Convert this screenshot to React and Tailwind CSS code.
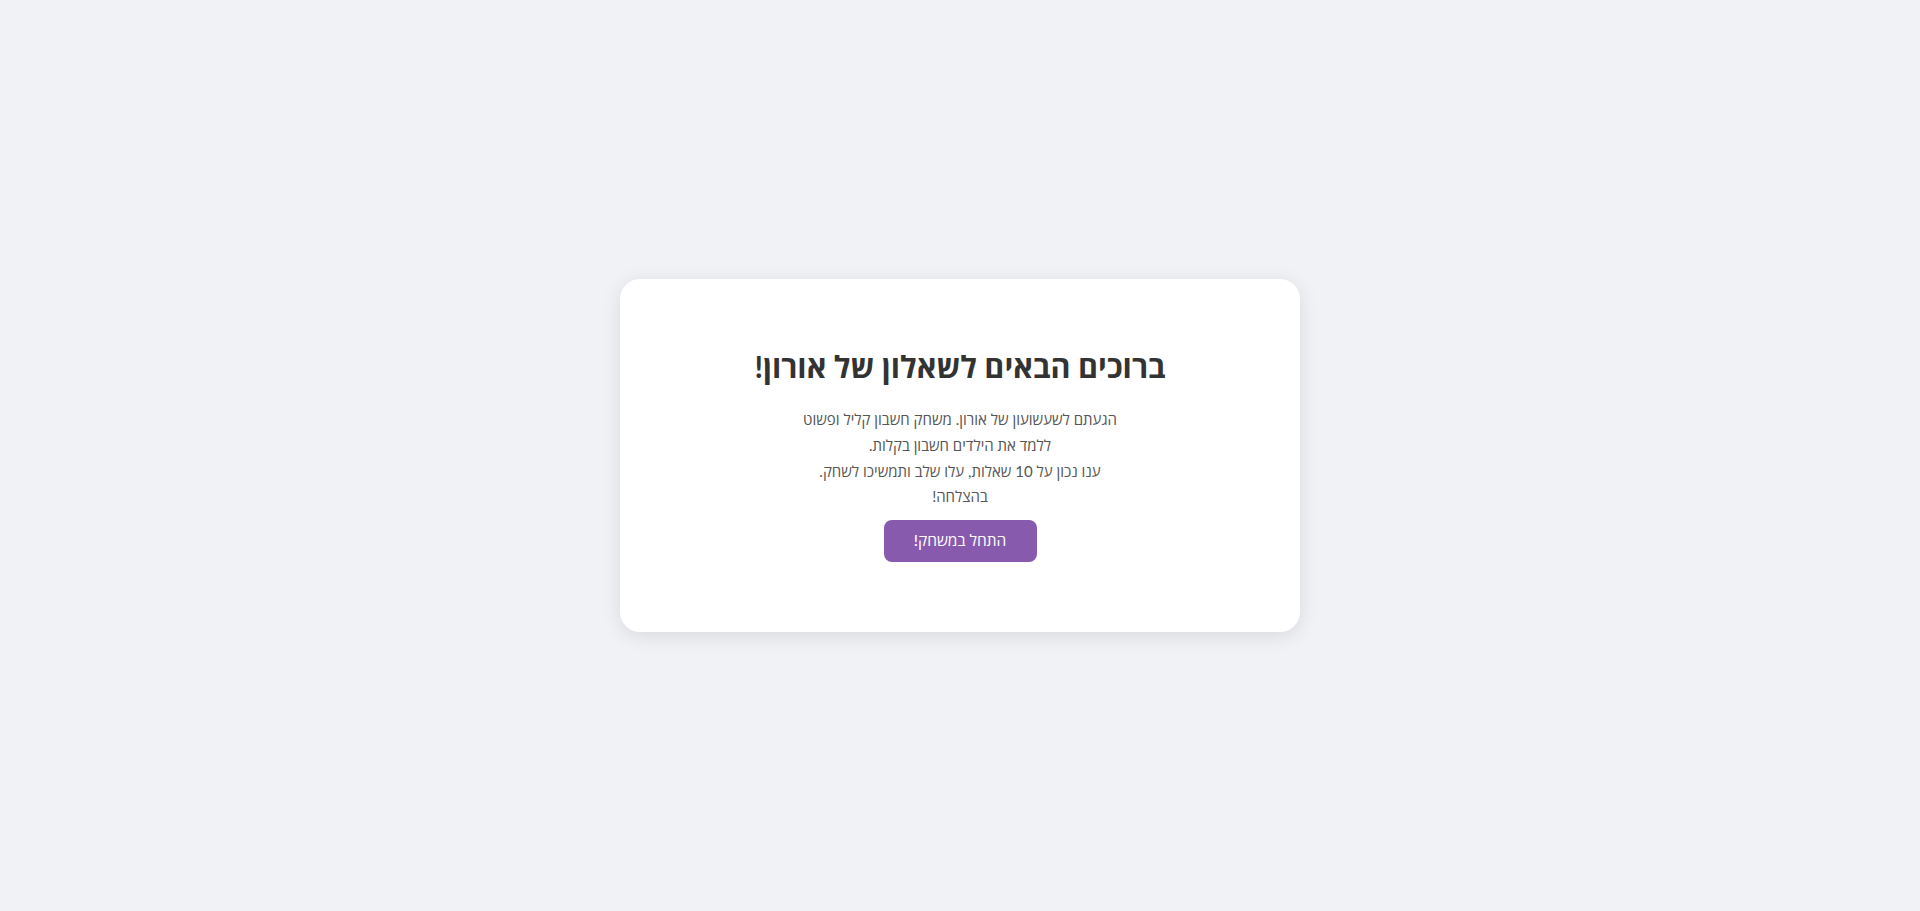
export default function App() {
  return (
    <div
      dir="rtl"
      className="min-h-[911px] w-full bg-[#f0f2f5] flex items-center justify-center"
      style={{ fontFamily: "Lato, 'Open Sans', 'Noto Sans', sans-serif" }}
    >
      <div className="w-[680px] bg-white rounded-[20px] shadow-[0_4px_20px_rgba(0,0,0,0.1)] px-10 pt-10 pb-10 flex flex-col items-center text-center">
        <h1 className="mt-[27px] text-[30.5px] leading-[40px] font-bold text-[#333]">
          ברוכים הבאים לשאלון של אורון!
        </h1>
        <p className="mt-[21px] text-[15px] leading-[25.6px] text-[#555]">
          הגעתם לשעשועון של אורון. משחק חשבון קליל ופשוט
          <br />
          ללמד את הילדים חשבון בקלות.
          <br />
          ענו נכון על 10 שאלות, עלו שלב ותמשיכו לשחק.
          <br />
          בהצלחה!
        </p>
        <button className="mt-[10px] mb-[30px] w-[153px] h-[42px] rounded-lg bg-[#875aae] text-white text-[15.5px] font-medium">
          התחל במשחק!
        </button>
      </div>
    </div>
  );
}
